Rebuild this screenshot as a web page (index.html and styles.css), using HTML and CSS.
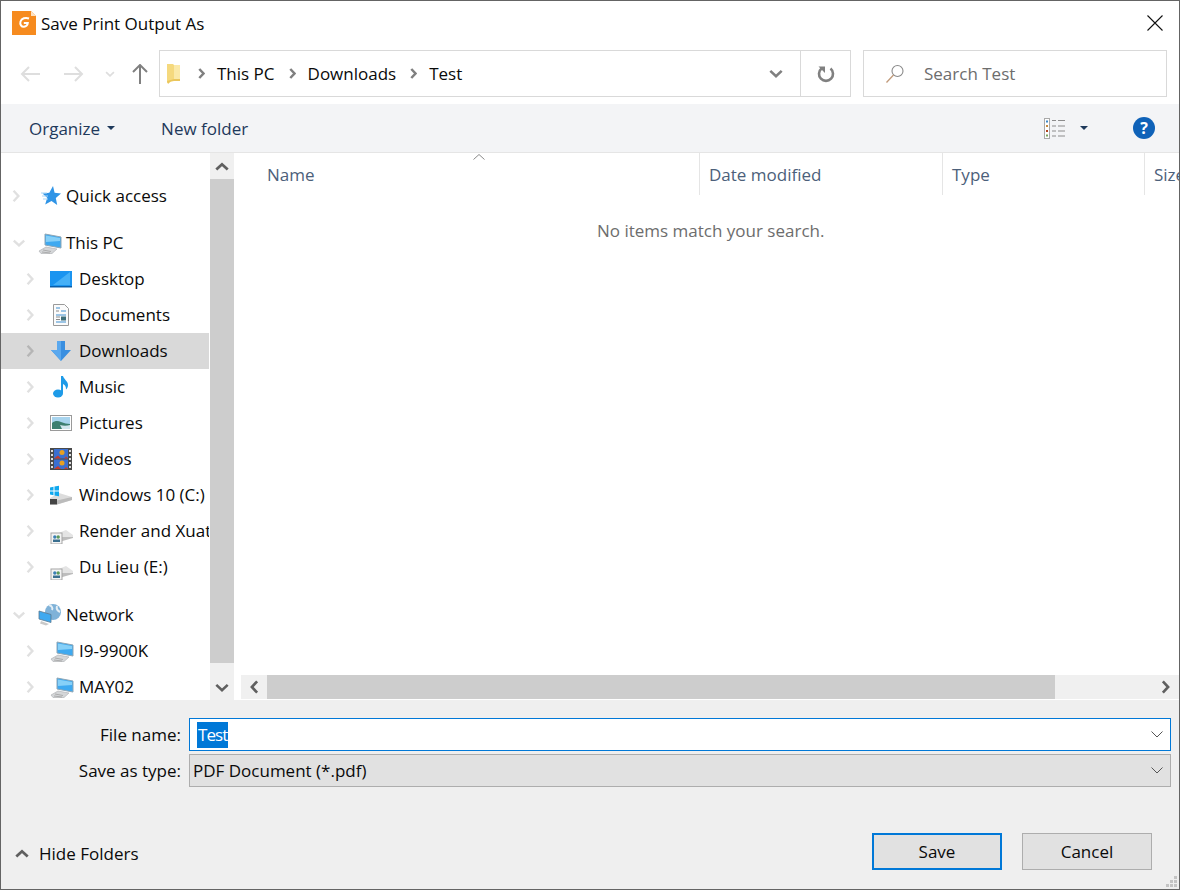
FILE: index.html
```html
<!DOCTYPE html>
<html lang="en">
<head>
    <meta charset="UTF-8">
    <title>Save Print Output As</title>
    <link rel="stylesheet" href="styles.css">
</head>
<body>
    <svg class="defs" width="0" height="0">
        <symbol id="chev-r" viewBox="0 0 10 16"><path d="M2 1.500 8 8l-6 6.500" fill="none" stroke="currentColor" stroke-width="3"/></symbol>
        <symbol id="chev-d" viewBox="0 0 16 10"><path d="M1.500 2 8 8l6.500-6" fill="none" stroke="currentColor" stroke-width="3"/></symbol>
        <symbol id="chev-u" viewBox="0 0 16 10"><path d="M1.500 8.500 8 2.500l6.500 6" fill="none" stroke="currentColor" stroke-width="3.200"/></symbol>
        <symbol id="crumb" viewBox="0 0 7 11"><path d="M1.300 1 5.500 5.500 1.300 10" fill="none" stroke="currentColor" stroke-width="2.500"/></symbol>
        <symbol id="thin-d" viewBox="0 0 12 7"><path d="M.5.500 6 6 11.500.5" fill="none" stroke="#555" stroke-width="1"/></symbol>
        <symbol id="pc" viewBox="0 0 24 22">
            <path d="M7 2 23 5v11L7 13z" fill="#3ea9f0" stroke="#8fa6b5"/>
            <path d="M8 3.500 22 6v3L8 10z" fill="#86d0f8"/>
            <path d="M1 19 8 15l11 2-5 4.500H3z" fill="#d4d6d8" stroke="#b3b5b7" stroke-width=".7"/>
            <path d="M5 18l8 1.500M4 20l8 1" stroke="#999" stroke-width=".7"/>
        </symbol>
        <symbol id="drive" viewBox="0 0 24 18">
            <path d="M1 10 16 4l7 5v2L8 16H1z" fill="#e4e4e4"/>
            <path d="M9 11h14v1l-14 4z" fill="#bdbdbd"/>
            <rect x="1" y="7" width="11" height="11" fill="#f4f4f4" stroke="#a5a5a5"/>
            <circle cx="4.800" cy="11" r="1.700" fill="#3b7fb5"/>
            <circle cx="8.200" cy="11" r="1.700" fill="#5c9a5c"/>
            <path d="M3 16v-2.500h3.500V16zM6.500 16v-2.500H10V16z" fill="#3a6f8f"/>
        </symbol>
    </svg>

    <div class="window">
        <header class="titlebar">
            <svg class="logo" width="24" height="24" viewBox="0 0 24 24">
                <path d="M0 0h19l5 5v19H0z" fill="#f68b1f"/>
                <path d="M19 0l5 5h-5z" fill="#fde3c4"/>
                <path d="M17 7.500c-3.500-1.500-7.500 0-8.500 3-.9 3 1 5.500 3.500 5.300 2.500-.2 3.600-2 3.800-3.800h-4" fill="none" stroke="#fff" stroke-width="2"/>
            </svg>
            <span class="title">Save Print Output As</span>
            <svg class="close" width="16" height="16" viewBox="0 0 16 16"><path d="M.5.500l15 15M15.500.500l-15 15" stroke="#111" stroke-width="1.100"/></svg>
        </header>

        <nav class="navbar">
            <div class="nav-buttons">
                <svg class="nav-back" width="20" height="16" viewBox="0 0 20 16"><path d="M9 1 2 8l7 7M2 8h18" fill="none" stroke="#dedede" stroke-width="2"/></svg>
                <svg class="nav-forward" width="20" height="16" viewBox="0 0 20 16"><path d="M11 1l7 7-7 7M18 8H0" fill="none" stroke="#dedede" stroke-width="2"/></svg>
                <svg class="nav-recent" width="10" height="6"><use href="#chev-d"/></svg>
                <svg class="nav-up" width="16" height="20" viewBox="0 0 16 20"><path d="M1 8l7-7 7 7M8 1v19" fill="none" stroke="#808080" stroke-width="2"/></svg>
            </div>
            <div class="address">
                <svg class="folder" width="15" height="21" viewBox="0 0 15 21">
                    <path d="M1 1h6l1 1v16l-7 2z" fill="#f5d97e"/>
                    <path d="M8 2h6v14H8z" fill="#fbe9a8"/>
                    <path d="M1 18l7-2h6v2H5l-3 3z" fill="#eac65c"/>
                </svg>
                <div class="crumbs">
                    <svg class="crumb-arrow" width="7" height="11"><use href="#crumb"/></svg>
                    <span>This PC</span>
                    <svg class="crumb-arrow" width="7" height="11"><use href="#crumb"/></svg>
                    <span>Downloads</span>
                    <svg class="crumb-arrow" width="7" height="11"><use href="#crumb"/></svg>
                    <span>Test</span>
                </div>
                <div class="address-drop"><svg class="icon-gray" width="14" height="9"><use href="#chev-d"/></svg></div>
                <div class="address-refresh">
                    <svg width="18" height="18" viewBox="0 0 18 18"><path d="M4.500 3.500a7 7 0 1 0 9 0" fill="none" stroke="#808080" stroke-width="2.600"/><path d="M1.500 1.500h6.500v6.500z" fill="#808080"/></svg>
                </div>
            </div>
            <div class="search">
                <svg width="20" height="20" viewBox="0 0 20 20"><circle cx="12.500" cy="7" r="5.500" fill="none" stroke="#8a8a8a" stroke-width="1.100"/><path d="M8.500 11 1.500 18.500" stroke="#c19a7a" stroke-width="1.300"/></svg>
                <span>Search Test</span>
            </div>
        </nav>

        <div class="toolbar">
            <span class="tool organize">Organize</span>
            <i class="caret"></i>
            <span class="tool new-folder">New folder</span>
            <div class="toolbar-right">
                <svg width="22" height="21" viewBox="0 0 22 21">
                    <rect x=".5" y=".5" width="5" height="20" fill="#fff" stroke="#a9a9a9"/>
                    <rect x="2" y="2.500" width="2" height="2" fill="#3d87c5"/>
                    <rect x="2" y="7" width="2" height="2" fill="#c58a3d"/>
                    <rect x="2" y="12" width="2" height="2" fill="#b0431f"/>
                    <rect x="2" y="16.500" width="2" height="2" fill="#7aa35a"/>
                    <path d="M8 2.500h4M14 2.500h7M8 8h4M14 8h7M8 13h4M14 13h7M8 18h4M14 18h7" stroke="#8c8c8c"/>
                </svg>
                <i class="caret view-caret"></i>
                <div class="help">?</div>
            </div>
        </div>

        <main class="content">
            <aside class="tree">
                <div class="tree-row top first">
                    <svg class="exp" width="8" height="14"><use href="#chev-r"/></svg>
                    <svg class="tree-icon" width="24" height="22" viewBox="0 0 24 22">
                        <path d="M15 1l1.600 6.800 6.400.8-5.200 4.300 1.400 7-5.700-3.800-6.300 3.500 2-6.800-4.700-4.400 6.800-.6z" fill="#2f94e6"/>
                        <path d="M3 8h6M4 11h6M5 14h5" stroke="#a8d5f7"/>
                    </svg>
                    <span>Quick access</span>
                </div>
                <div class="tree-row top group">
                    <svg class="exp" width="14" height="8"><use href="#chev-d"/></svg>
                    <svg class="tree-icon" width="24" height="22"><use href="#pc"/></svg>
                    <span>This PC</span>
                </div>
                <div class="tree-row">
                    <svg class="exp" width="8" height="14"><use href="#chev-r"/></svg>
                    <svg class="tree-icon" width="22" height="18" viewBox="0 0 22 18"><rect width="22" height="16" y="1" fill="#1a94f0"/><path d="M3 15 20 2v13z" fill="#45b0f7"/><path d="M0 16h22v1.500H0z" fill="#0a5ea8"/></svg>
                    <span>Desktop</span>
                </div>
                <div class="tree-row">
                    <svg class="exp" width="8" height="14"><use href="#chev-r"/></svg>
                    <svg class="tree-icon" width="22" height="22" viewBox="0 0 22 22">
                        <path d="M3.500.500h11l4 4v17h-15z" fill="#fbfbfb" stroke="#9a9a9a"/>
                        <path d="M6 4h4M11 7h5M6 11h10M6 18h10" stroke="#3f8fd0"/>
                        <path d="M6 7h3M6 13h4M6 15.500h4" stroke="#8a8a8a"/>
                        <rect x="11" y="12.500" width="5" height="4" fill="#3f6f7a"/>
                    </svg>
                    <span>Documents</span>
                </div>
                <div class="tree-row selected">
                    <svg class="exp" width="8" height="14"><use href="#chev-r"/></svg>
                    <svg class="tree-icon" width="22" height="20" viewBox="0 0 22 20"><path d="M7 0h8v9h6L11 20 1 9h6z" fill="#3a8fe0"/><path d="M7 0h4v20L1 9h6z" fill="#5aa8ee"/></svg>
                    <span>Downloads</span>
                </div>
                <div class="tree-row">
                    <svg class="exp" width="8" height="14"><use href="#chev-r"/></svg>
                    <svg class="tree-icon" width="22" height="22" viewBox="0 0 22 22"><ellipse cx="8" cy="17.500" rx="5" ry="4" fill="#1e9be8"/><path d="M11 17V0h2c.5 3 5 5 5 9 0 2-1 3.500-2 4.500.3-3-1.500-5-3-5.500v9z" fill="#1e9be8"/></svg>
                    <span>Music</span>
                </div>
                <div class="tree-row">
                    <svg class="exp" width="8" height="14"><use href="#chev-r"/></svg>
                    <svg class="tree-icon" width="22" height="16" viewBox="0 0 22 16">
                        <rect x=".5" y=".5" width="21" height="15" fill="#fff" stroke="#9a9a9a"/>
                        <rect x="2" y="2" width="18" height="12" fill="#a8d4ee"/>
                        <path d="M2 8c3-2.500 6-2.500 9-1 3 1 6 2 9 2v5H2z" fill="#3d7f70"/>
                        <path d="M10 10c3 1 7 1 10 0v4h-8z" fill="#d2e6ee"/>
                    </svg>
                    <span>Pictures</span>
                </div>
                <div class="tree-row">
                    <svg class="exp" width="8" height="14"><use href="#chev-r"/></svg>
                    <svg class="tree-icon" width="22" height="22" viewBox="0 0 22 22">
                        <rect width="22" height="22" fill="#4a4a4a"/>
                        <path d="M1 2h2v2H1zM1 6h2v2H1zM1 10h2v2H1zM1 14h2v2H1zM1 18h2v2H1zM19 2h2v2h-2zM19 6h2v2h-2zM19 10h2v2h-2zM19 14h2v2h-2zM19 18h2v2h-2z" fill="#ddd"/>
                        <rect x="4" y="1" width="14" height="9.500" fill="#3a6fd0"/>
                        <rect x="4" y="11.500" width="14" height="9.500" fill="#3a6fd0"/>
                        <circle cx="12" cy="4.500" r="2.500" fill="#e8a020"/>
                        <circle cx="12" cy="15" r="2.500" fill="#e8a020"/>
                        <path d="M4 10.500l4-3 3 3zM4 21l4-3 3 3zM14 10.500l2-2 2 2zM14 21l2-2 2 2z" fill="#c83a2a"/>
                    </svg>
                    <span>Videos</span>
                </div>
                <div class="tree-row">
                    <svg class="exp" width="8" height="14"><use href="#chev-r"/></svg>
                    <svg class="tree-icon" width="23" height="20" viewBox="0 0 23 20">
                        <path d="M0 13 9 8l13 4v3L7 19.500H0z" fill="#dcdcdc"/>
                        <path d="M0 14h7v5.500H0z" fill="#444"/>
                        <path d="M7 15.500 22 12v3L7 19.500z" fill="#bbb"/>
                        <path d="M0 2.500l3.500-.7v3.700H0zM4.500 1.600 9 .7v4.800H4.500zM0 6.500h3.500v3.700L0 9.500zM4.500 6.500H9v4.800l-4.500-.9z" fill="#10a8ee"/>
                    </svg>
                    <span>Windows 10 (C:)</span>
                </div>
                <div class="tree-row offset">
                    <svg class="exp" width="8" height="14"><use href="#chev-r"/></svg>
                    <svg class="tree-icon" width="24" height="18"><use href="#drive"/></svg>
                    <span>Render and Xuat</span>
                </div>
                <div class="tree-row offset">
                    <svg class="exp" width="8" height="14"><use href="#chev-r"/></svg>
                    <svg class="tree-icon" width="24" height="18"><use href="#drive"/></svg>
                    <span>Du Lieu (E:)</span>
                </div>
                <div class="tree-row top group last">
                    <svg class="exp" width="14" height="8"><use href="#chev-d"/></svg>
                    <svg class="tree-icon" width="24" height="22" viewBox="0 0 24 22">
                        <circle cx="15" cy="8" r="8" fill="#7fb2d8"/>
                        <path d="M11 1c3 1 4 3 3 5M19 2c-1 3 1 5 3 6" fill="none" stroke="#e4eef5" stroke-width="2"/>
                        <path d="M1 7l12 3.500v8L1 15z" fill="#3ea9f0" stroke="#5c7a90" stroke-width=".8"/>
                        <path d="M3 17l8 3-3 1.500-6-2z" fill="#c9c9c9"/>
                    </svg>
                    <span>Network</span>
                </div>
                <div class="tree-row">
                    <svg class="exp" width="8" height="14"><use href="#chev-r"/></svg>
                    <svg class="tree-icon" width="24" height="22"><use href="#pc"/></svg>
                    <span>I9-9900K</span>
                </div>
                <div class="tree-row">
                    <svg class="exp" width="8" height="14"><use href="#chev-r"/></svg>
                    <svg class="tree-icon" width="24" height="22"><use href="#pc"/></svg>
                    <span>MAY02</span>
                </div>
            </aside>

            <div class="vscroll">
                <div class="scroll-btn"><svg class="icon-dark" width="14" height="9"><use href="#chev-u"/></svg></div>
                <div class="vthumb"></div>
                <div class="scroll-btn"><svg class="icon-dark" width="14" height="9"><use href="#chev-d"/></svg></div>
            </div>

            <section class="list">
                <div class="list-head">
                    <svg class="sort" width="12" height="6" viewBox="0 0 12 6"><path d="M.5 5.500 6 .5l5.500 5" fill="none" stroke="#8a8a8a"/></svg>
                    <div class="col col-name">Name</div>
                    <div class="col col-date">Date modified</div>
                    <div class="col col-type">Type</div>
                    <div class="col col-size">Size</div>
                </div>
                <div class="list-body">No items match your search.</div>
                <div class="hscroll">
                    <div class="hbtn"><svg class="icon-dark flip" width="9" height="14"><use href="#chev-r"/></svg></div>
                    <div class="hthumb"></div>
                    <div class="hbtn right"><svg class="icon-dark" width="9" height="14"><use href="#chev-r"/></svg></div>
                </div>
            </section>
        </main>

        <footer class="footer">
            <div class="field">
                <label>File name:</label>
                <div class="input focused"><span class="selection">Test</span><svg width="12" height="7"><use href="#thin-d"/></svg></div>
            </div>
            <div class="field">
                <label>Save as type:</label>
                <div class="input combo"><span>PDF Document (*.pdf)</span><svg width="12" height="7"><use href="#thin-d"/></svg></div>
            </div>
            <div class="actions">
                <div class="hide-folders">
                    <svg class="icon-dark" width="14" height="9"><use href="#chev-u"/></svg>
                    <span>Hide Folders</span>
                </div>
                <div class="btn primary">Save</div>
                <div class="btn">Cancel</div>
            </div>
            <svg class="grip" width="12" height="12" viewBox="0 0 12 12"><path d="M8 0h3v3H8zM4 4h3v3H4zM8 4h3v3H8zM0 8h3v3H0zM4 8h3v3H4zM8 8h3v3H8z" fill="#c4c4c4"/></svg>
        </footer>
    </div>
</body>
</html>
```

FILE: styles.css
```css
* {
    box-sizing: border-box;
}

html, body {
    margin: 0;
    height: 100%;
    overflow: hidden;
}

body {
    font-family: "Open Sans", "Noto Sans", sans-serif;
    font-size: 17px;
    color: #0a0a0a;
    background: #fff;
}

.defs {
    position: absolute;
}

.window {
    width: 1180px;
    height: 890px;
    display: flex;
    flex-direction: column;
    border: 1px solid #646464;
    background: #fff;
}

.titlebar {
    height: 43px;
    flex: none;
    display: flex;
    align-items: center;
    padding: 0 16px 0 11px;
}

.logo {
    margin-right: 5px;
}

.title {
    flex: 1;
    padding-top: 2px;
}

.navbar {
    height: 60px;
    flex: none;
    display: flex;
    padding: 6px 12px 7px 0;
}

.nav-buttons {
    width: 158px;
    flex: none;
    display: flex;
    align-items: center;
}

.nav-back { margin-left: 19px; }
.nav-forward { margin-left: 24px; }
.nav-recent { margin-left: 21px; color: #dedede; }
.nav-up { margin-left: 17px; }

.address {
    flex: 1;
    display: flex;
    align-items: center;
    border: 1px solid #d9d9d9;
    padding-left: 6px;
}

.folder {
    flex: none;
}

.crumbs {
    flex: 1;
    display: flex;
    align-items: center;
    margin-left: 17px;
}

.crumb-arrow {
    color: #808080;
    margin-right: 12px;
}

.crumbs span {
    margin-right: 14px;
}

.address-drop {
    width: 48px;
    height: 100%;
    display: flex;
    align-items: center;
    justify-content: center;
}

.address-refresh {
    width: 50px;
    height: 100%;
    display: flex;
    align-items: center;
    justify-content: center;
    border-left: 1px solid #d9d9d9;
}

.icon-gray { color: #808080; }
.icon-dark { color: #5f5f5f; }

.search {
    width: 304px;
    flex: none;
    margin-left: 12px;
    display: flex;
    align-items: center;
    border: 1px solid #d9d9d9;
    padding-left: 21px;
    color: #6d6d6d;
}

.search span {
    margin-left: 19px;
}

.toolbar {
    height: 49px;
    flex: none;
    display: flex;
    align-items: center;
    background: #f3f4f6;
    border-bottom: 1px solid #e5e5e5;
    padding-left: 28px;
    color: #1e395b;
}

.caret {
    width: 0;
    height: 0;
    border-left: 4px solid transparent;
    border-right: 4px solid transparent;
    border-top: 4px solid #1e395b;
    margin-left: 7px;
}

.new-folder {
    margin-left: 46px;
}

.toolbar-right {
    margin-left: auto;
    display: flex;
    align-items: center;
    padding-right: 24px;
}

.view-caret {
    margin-left: 14px;
}

.help {
    width: 22px;
    height: 22px;
    margin-left: 45px;
    border-radius: 50%;
    background: #0f62b8;
    color: #fff;
    font-weight: 700;
    font-size: 16px;
    line-height: 22px;
    text-align: center;
}

.content {
    height: 547px;
    flex: none;
    display: flex;
}

.tree {
    width: 209px;
    flex: none;
    padding-top: 25px;
    overflow: hidden;
}

.tree-row {
    width: 208px;
    height: 36px;
    flex: none;
    display: flex;
    align-items: center;
    white-space: nowrap;
    overflow: hidden;
    position: relative;
    padding-left: 78px;
}

.tree-row span {
    margin-bottom: 2px;
}

.tree-row.top {
    padding-left: 65px;
}

.tree-row.group {
    margin-top: 11px;
}

.tree-row.last {
    margin-top: 12px;
}

.tree-row.selected {
    background: #d9d9d9;
}

.tree-row.offset .tree-icon {
    margin-top: 8px;
}

.exp {
    position: absolute;
    left: 25px;
    color: #e0e0e0;
}

.tree-row.top .exp {
    left: 11px;
}

.tree-row.selected .exp {
    color: #b5b5b5;
}

.tree-icon {
    position: absolute;
    left: 49px;
}

.tree-row.top .tree-icon {
    left: 37px;
}

.vscroll {
    width: 24px;
    flex: none;
    display: flex;
    flex-direction: column;
    background: #f0f0f0;
}

.scroll-btn {
    height: 26px;
    flex: none;
    display: flex;
    align-items: center;
    justify-content: center;
}

.scroll-btn:last-child {
    height: 37px;
    padding-top: 12px;
}

.vthumb {
    flex: 1;
    background: #cdcdcd;
}

.list {
    flex: 1;
    min-width: 0;
    margin-left: 7px;
    display: flex;
    flex-direction: column;
    overflow: hidden;
}

.list-head {
    height: 42px;
    flex: none;
    display: flex;
    position: relative;
    color: #4c607a;
}

.sort {
    position: absolute;
    left: 232px;
    top: 1px;
}

.col {
    display: flex;
    align-items: center;
    padding-left: 9px;
    border-left: 1px solid #e5e5e5;
    flex: none;
    white-space: nowrap;
}

.col-name {
    width: 458px;
    padding-left: 26px;
    border-left: none;
}

.col-date { width: 243px; }
.col-type { width: 202px; }
.col-size { width: 60px; }

.list-body {
    flex: 1;
    padding: 24px 0 0 356px;
    color: #6d6d6d;
}

.hscroll {
    height: 24px;
    flex: none;
    display: flex;
    background: #f0f0f0;
    margin-bottom: 1px;
}

.hbtn {
    width: 26px;
    flex: none;
    display: flex;
    align-items: center;
    justify-content: center;
}

.hbtn.right {
    margin-left: auto;
    width: 28px;
}

.flip {
    transform: scaleX(-1);
}

.hthumb {
    width: 788px;
    background: #cdcdcd;
}

.footer {
    flex: 1;
    display: flex;
    flex-direction: column;
    position: relative;
    background: #efefef;
    padding: 18px 8px 19px 0;
}

.field {
    display: flex;
    align-items: center;
    margin-bottom: 3px;
}

.field label {
    width: 180px;
    flex: none;
    text-align: right;
    margin-right: 8px;
}

.input {
    flex: 1;
    height: 33px;
    display: flex;
    align-items: center;
    justify-content: space-between;
    padding: 0 7px 0 7px;
    border: 1px solid #adadad;
}

.input.focused {
    background: #fff;
    border-color: #0078d7;
}

.input.combo {
    background: #e1e1e1;
    padding-left: 3px;
}

.selection {
    background: #0078d7;
    color: #fff;
    line-height: 26px;
    padding: 0 1px;
    letter-spacing: -.9px;
}

.actions {
    margin-top: auto;
    display: flex;
    align-items: center;
    padding-left: 14px;
    padding-right: 19px;
}

.hide-folders {
    flex: 1;
    display: flex;
    align-items: center;
    padding-top: 4px;
}

.hide-folders span {
    margin-left: 10px;
}

.btn {
    width: 130px;
    height: 37px;
    display: flex;
    align-items: center;
    justify-content: center;
    background: #e1e1e1;
    border: 1px solid #adadad;
    margin-left: 20px;
}

.btn.primary {
    border: 2px solid #0078d7;
}

.grip {
    position: absolute;
    right: 1px;
    bottom: 1px;
}
```
